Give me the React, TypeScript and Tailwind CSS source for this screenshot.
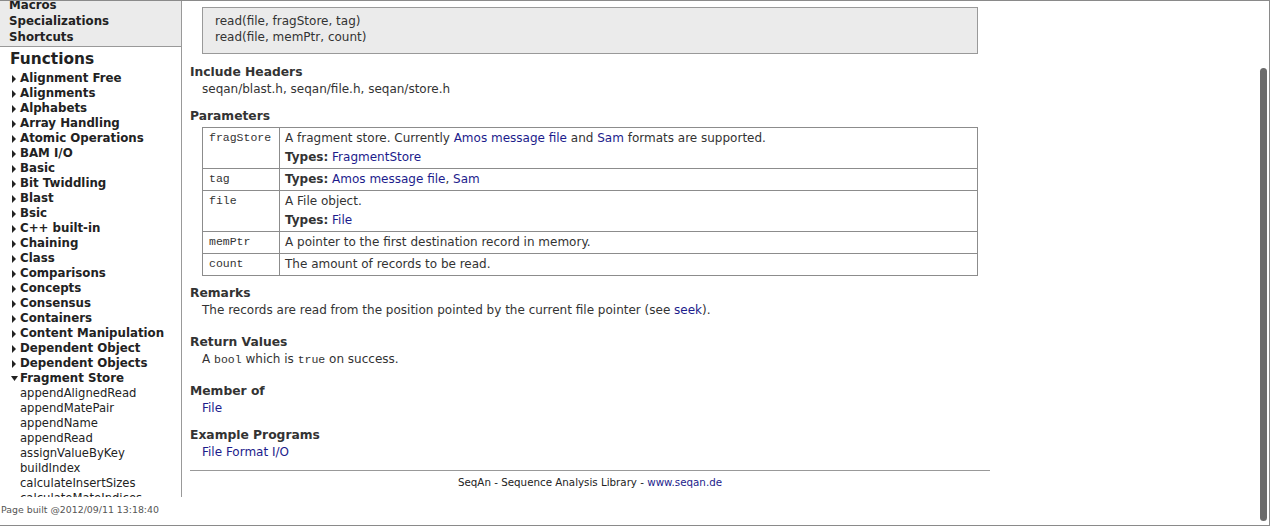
const groups = [
  "Alignment Free",
  "Alignments",
  "Alphabets",
  "Array Handling",
  "Atomic Operations",
  "BAM I/O",
  "Basic",
  "Bit Twiddling",
  "Blast",
  "Bsic",
  "C++ built-in",
  "Chaining",
  "Class",
  "Comparisons",
  "Concepts",
  "Consensus",
  "Containers",
  "Content Manipulation",
  "Dependent Object",
  "Dependent Objects",
];

const fragmentFunctions = [
  "appendAlignedRead",
  "appendMatePair",
  "appendName",
  "appendRead",
  "assignValueByKey",
  "buildIndex",
  "calculateInsertSizes",
  "calculateMateIndices",
];

function Arrow({ open }: { open?: boolean }) {
  if (open) {
    return (
      <svg width="7" height="5" viewBox="0 0 7 5" className="mr-[2px] shrink-0">
        <polygon points="0,0 7,0 3.5,5" fill="#222" />
      </svg>
    );
  }
  return (
    <svg width="4" height="8" viewBox="0 0 4 8" className="ml-[1px] mr-[4px] shrink-0">
      <polygon points="0,0 4,4 0,8" fill="#222" />
    </svg>
  );
}

function Sidebar() {
  return (
    <div className="w-[182px] shrink-0 flex flex-col">
      <div className="h-[496px] border-r border-[#999] overflow-hidden">
        <div className="h-[46px] bg-[#ebebeb] border-b border-[#999] overflow-hidden">
          <div className="-mt-[3px] pl-[9px] flex flex-col font-bold text-[11.8px] leading-[15.8px] text-[#222]">
            <span>Macros</span>
            <span>Specializations</span>
            <span>Shortcuts</span>
          </div>
        </div>
        <div className="mt-[3px] pl-[10px] font-bold text-[15.4px] leading-[18px] text-[#222]">Functions</div>
        <ul className="mt-[3px] pl-[11px] text-[11.8px] leading-[15px] text-[#222]">
          {groups.map((g) => (
            <li key={g} className="flex items-center font-bold">
              <Arrow />
              {g}
            </li>
          ))}
          <li className="flex items-center font-bold">
            <Arrow open />
            Fragment Store
          </li>
          {fragmentFunctions.map((f) => (
            <li key={f} className="pl-[9px] text-[11.6px]">
              {f}
            </li>
          ))}
        </ul>
      </div>
      <div className="pt-[7px] pl-[1px] text-[9.4px] leading-[12px] text-[#555]">
        Page built @2012/09/11 13:18:40
      </div>
    </div>
  );
}

function A({ children }: { children: React.ReactNode }) {
  return <a className="text-[#1c1c8c]">{children}</a>;
}

function Code({ children }: { children: React.ReactNode }) {
  return <code className="font-['Liberation_Mono',monospace] text-[11.5px] leading-[14px]">{children}</code>;
}

function Heading({ children, className = "" }: { children: React.ReactNode; className?: string }) {
  return <div className={"font-bold text-[12.3px] leading-[16px] text-[#333] " + className}>{children}</div>;
}

function Body({ children, className = "" }: { children: React.ReactNode; className?: string }) {
  return <div className={"pl-[12px] mt-[1px] h-[16px] leading-[16px] " + className}>{children}</div>;
}

const params: { name: string; lines: React.ReactNode[] }[] = [
  {
    name: "fragStore",
    lines: [
      <>
        A fragment store. Currently <A>Amos message file</A> and <A>Sam</A> formats are supported.
      </>,
      <>
        <b>Types:</b> <A>FragmentStore</A>
      </>,
    ],
  },
  {
    name: "tag",
    lines: [
      <>
        <b>Types:</b> <A>Amos message file</A>, <A>Sam</A>
      </>,
    ],
  },
  {
    name: "file",
    lines: [
      <>A File object.</>,
      <>
        <b>Types:</b> <A>File</A>
      </>,
    ],
  },
  { name: "memPtr", lines: [<>A pointer to the first destination record in memory.</>] },
  { name: "count", lines: [<>The amount of records to be read.</>] },
];

function ParamTable() {
  return (
    <table className="ml-[12px] mt-[3px] w-[776px] border-collapse border border-[#8c8c8c]">
      <tbody>
        {params.map((p) => (
          <tr key={p.name} className="border border-[#8c8c8c]">
            <td className="w-[77px] align-top border border-[#8c8c8c] pl-[6px] pt-[2px] leading-[14px]">
              <span className="font-['Liberation_Mono',monospace] text-[11.5px]">{p.name}</span>
            </td>
            <td className="align-top border border-[#8c8c8c] pl-[5px] pt-[2px] pb-[3px] leading-[16px]">
              {p.lines.map((l, i) => (
                <div key={i} className={i > 0 ? "mt-[3px]" : ""}>
                  {l}
                </div>
              ))}
            </td>
          </tr>
        ))}
      </tbody>
    </table>
  );
}

export default function App() {
  return (
    <div className="w-[1270px] h-[526px] flex border-t border-r border-b border-[#8a8a8a] bg-white overflow-hidden font-['DejaVu_Sans',sans-serif] text-[12px] text-[#333]">
      <Sidebar />
      <div className="flex-1 relative">
        <div className="pl-[8px] w-[808px]">
          <div className="ml-[12px] mt-[6px] w-[776px] bg-[#ebebeb] border border-[#999] pl-[12px] pt-[5px] pb-[8px] leading-[16px]">
            <div>read(file, fragStore, tag)</div>
            <div>read(file, memPtr, count)</div>
          </div>

          <Heading className="mt-[10px]">Include Headers</Heading>
          <Body>seqan/blast.h, seqan/file.h, seqan/store.h</Body>

          <Heading className="mt-[11px]">Parameters</Heading>
          <ParamTable />

          <Heading className="mt-[9px]">Remarks</Heading>
          <Body>
            The records are read from the position pointed by the current file pointer (see <A>seek</A>).
          </Body>

          <Heading className="mt-[16px]">Return Values</Heading>
          <Body>
            A <Code>bool</Code> which is <Code>true</Code> on success.
          </Body>

          <Heading className="mt-[16px]">Member of</Heading>
          <Body>
            <A>File</A>
          </Body>

          <Heading className="mt-[11px]">Example Programs</Heading>
          <Body>
            <A>File Format I/O</A>
          </Body>

          <div className="mt-[10px] w-[800px] border-t border-[#999]" />
          <div className="w-[800px] text-center text-[10.3px] leading-[12px] pt-[5px] text-[#222]">
            SeqAn - Sequence Analysis Library - <A>www.seqan.de</A>
          </div>
        </div>
        <div className="absolute right-[2px] top-[67px] w-[7px] h-[453px] rounded-full bg-[#6b6b6b]" />
      </div>
    </div>
  );
}
